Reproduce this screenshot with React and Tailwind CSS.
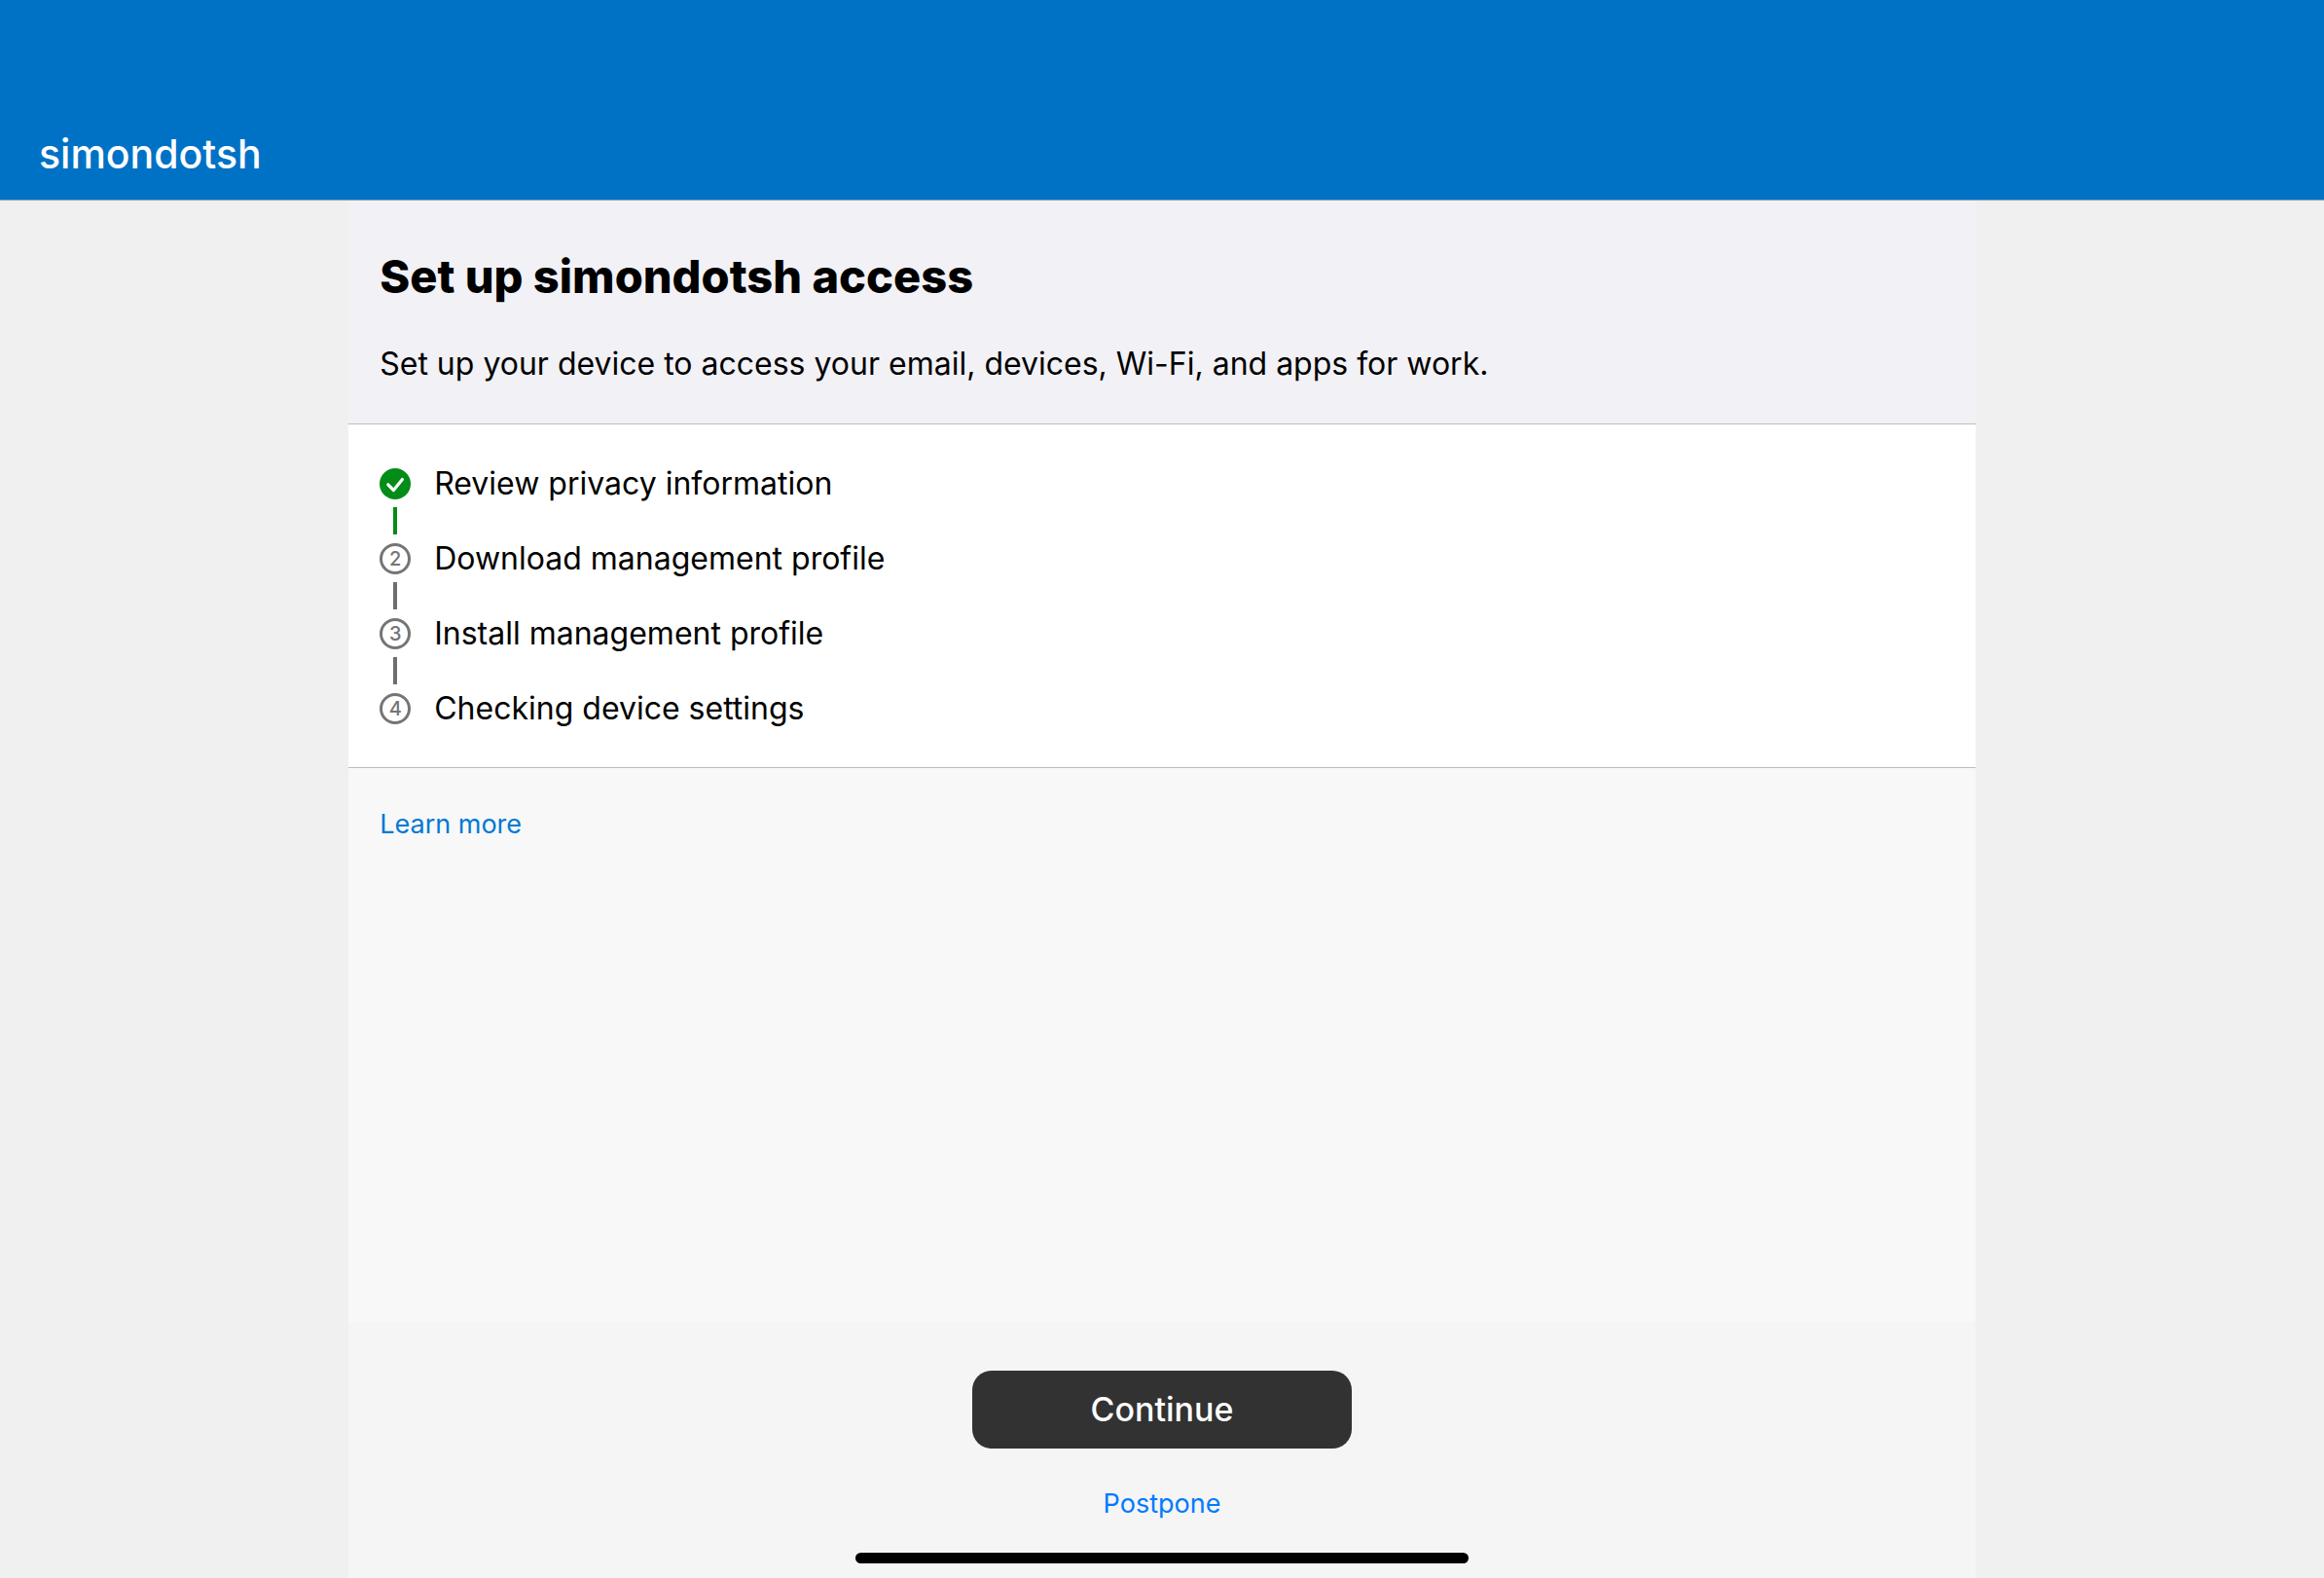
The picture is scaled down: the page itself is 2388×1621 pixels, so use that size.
const steps = [
  { label: "Review privacy information", done: true },
  { label: "Download management profile", done: false },
  { label: "Install management profile", done: false },
  { label: "Checking device settings", done: false },
];

function StepMarker({ number, done }) {
  if (done) {
    return (
      <svg viewBox="0 0 32 32" className="size-8 shrink-0" role="img" aria-label="Completed">
        <circle cx="16" cy="16" r="16" fill="#038c17" />
        <path
          d="M8.8 16.8l5.6 5.8L23.4 11.4"
          fill="none"
          stroke="#fff"
          strokeWidth="3.2"
          strokeLinecap="round"
          strokeLinejoin="round"
        />
      </svg>
    );
  }
  return (
    <span className="flex size-8 shrink-0 items-center justify-center rounded-full border-[3px] border-[#757575] text-[20px] leading-5 font-medium text-[#757575]">
      {number}
    </span>
  );
}

export default function App() {
  return (
    <div className="flex min-h-screen flex-col bg-[#f0f0f0] font-[Inter,'Liberation_Sans',sans-serif] text-black">
      <header className="border-b border-[#8a9cab] bg-[#0072c6] px-10 pt-[134px] pb-[23px]">
        <p className="text-[41px] leading-12 font-medium text-white">simondotsh</p>
      </header>

      <main className="mx-auto flex w-[70%] grow flex-col bg-[#f8f8f8]">
        <section className="border-b border-[#bdbdc2] bg-[#f2f1f6] px-8 pt-[50px] pb-[39px]">
          <h1 className="text-[47px] leading-14 font-extrabold">Set up simondotsh access</h1>
          <p className="mt-10 text-[32px] leading-11">
            Set up your device to access your email, devices, Wi-Fi, and apps for work.
          </p>
        </section>

        <ol className="border-b border-[#bdbdbd] bg-white px-8 pt-[39px] pb-[38px]">
          {steps.map((step, index) => (
            <li key={step.label}>
              <div className="flex items-center gap-6">
                <StepMarker number={index + 1} done={step.done} />
                <span className="text-[32px] leading-11">{step.label}</span>
              </div>
              {index < steps.length - 1 && (
                <div className="flex h-[33px] w-8 justify-center pt-[2px]">
                  <span className={step.done ? "h-7 w-1 bg-[#038c17]" : "h-7 w-1 bg-[#6e6e6e]"} />
                </div>
              )}
            </li>
          ))}
        </ol>

        <div className="grow px-8 pt-10">
          <a href="#learn-more" className="text-[27px] leading-9 text-[#0078d4]">
            Learn more
          </a>
        </div>

        <footer className="flex flex-col items-center bg-[#f5f5f5] pt-[50px] pb-[15px]">
          <button
            type="button"
            className="h-20 w-[390px] rounded-[20px] bg-[#323232] text-[34px] leading-11 font-medium text-white"
          >
            Continue
          </button>
          <button type="button" className="mt-[39px] text-[27px] leading-9 text-[#007aff]">
            Postpone
          </button>
          <div className="mt-8 h-[11px] w-[630px] rounded-full bg-black" />
        </footer>
      </main>
    </div>
  );
}
